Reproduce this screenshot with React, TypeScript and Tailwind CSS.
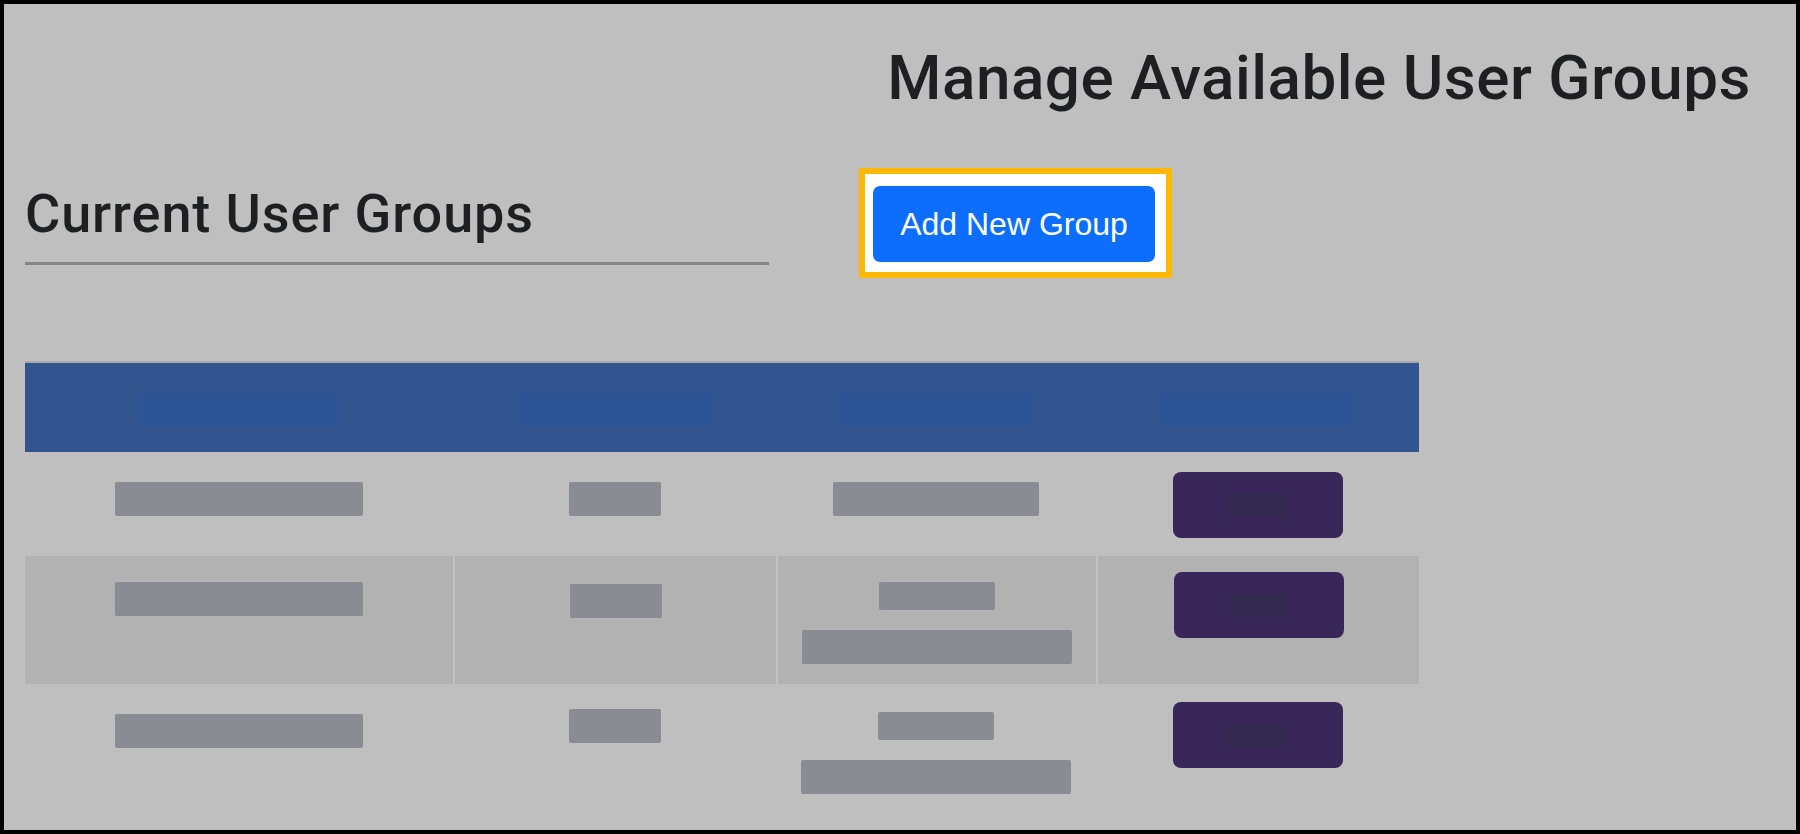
import React from 'react';

interface Cell { top: string; bars: { w: string; h: string; mt: string }[] }
interface Row { height: string; striped: boolean; name: Cell; count: Cell; members: Cell; action: string }

const rows: Row[] = [
  {
    height: 'h-[104px]', striped: false,
    name: { top: 'pt-[30px]', bars: [{ w: 'w-[248px]', h: 'h-[34px]', mt: 'mt-0' }] },
    count: { top: 'pt-[30px]', bars: [{ w: 'w-[92px]', h: 'h-[34px]', mt: 'mt-0' }] },
    members: { top: 'pt-[30px]', bars: [{ w: 'w-[206px]', h: 'h-[34px]', mt: 'mt-0' }] },
    action: 'pt-[20px]',
  },
  {
    height: 'h-[128px]', striped: true,
    name: { top: 'pt-[26px]', bars: [{ w: 'w-[248px]', h: 'h-[34px]', mt: 'mt-0' }] },
    count: { top: 'pt-[28px]', bars: [{ w: 'w-[92px]', h: 'h-[34px]', mt: 'mt-0' }] },
    members: { top: 'pt-[26px]', bars: [{ w: 'w-[116px]', h: 'h-[28px]', mt: 'mt-0' }, { w: 'w-[270px]', h: 'h-[34px]', mt: 'mt-[20px]' }] },
    action: 'pt-[16px]',
  },
  {
    height: 'h-[128px]', striped: false,
    name: { top: 'pt-[30px]', bars: [{ w: 'w-[248px]', h: 'h-[34px]', mt: 'mt-0' }] },
    count: { top: 'pt-[25px]', bars: [{ w: 'w-[92px]', h: 'h-[34px]', mt: 'mt-0' }] },
    members: { top: 'pt-[28px]', bars: [{ w: 'w-[116px]', h: 'h-[28px]', mt: 'mt-0' }, { w: 'w-[270px]', h: 'h-[34px]', mt: 'mt-[20px]' }] },
    action: 'pt-[18px]',
  },
];

const headers = ['w-[200px]', 'w-[196px]', 'w-[198px]', 'w-[196px]'];

function BarCell({ cell, divider }: { cell: Cell; divider: boolean }) {
  return (
    <div className={`flex flex-col items-center ${cell.top} ${divider ? 'border-l-2 border-[#c2c2c2]' : ''}`}>
      {cell.bars.map((b, i) => (
        <div key={i} className={`${b.w} ${b.h} ${b.mt} rounded-[2px] bg-[#8a8c94]`} />
      ))}
    </div>
  );
}

export default function App() {
  return (
    <div className="w-[1800px] h-[834px] border-4 border-black bg-[#bfbfbf] overflow-hidden font-['Liberation_Sans',Arial,sans-serif] text-[#1e1f22]">
      <div className="flex justify-end pt-[43px] pr-[45px]">
        <h1 className="font-['Roboto',sans-serif] font-medium text-[62px] leading-none tracking-[0.5px]">Manage Available User Groups</h1>
      </div>

      <div className="flex items-start mt-[59px] pl-[21px]">
        <div className="w-[744px] pt-[19px]">
          <h2 className="font-['Roboto',sans-serif] font-medium text-[54px] leading-none tracking-[0.9px]">Current User Groups</h2>
          <div className="mt-[21px] h-[3px] bg-[#858585]" />
        </div>
        <div className="ml-[90px] border-[6px] border-[#fcb900] bg-white pt-[12px] pb-[10px] pl-[8px] pr-[11px]">
          <button className="w-[282px] h-[76px] rounded-[7px] bg-[#0d6efd] text-white text-[32px] leading-none">Add New Group</button>
        </div>
      </div>

      <div className="mt-[83px] ml-[21px] w-[1394px]">
        <div className="grid grid-cols-[428px_323px_320px_323px] h-[91px] border-t-2 border-[#a8a8a8] bg-[#32558f]">
          {headers.map((w, i) => (
            <div key={i} className="flex justify-center pt-[30px]">
              <div className={`${w} h-[33px] bg-[#2d5596]`} />
            </div>
          ))}
        </div>
        {rows.map((r, i) => (
          <div key={i} className={`grid grid-cols-[428px_323px_320px_323px] ${r.height} ${r.striped ? 'bg-[#b2b2b2]' : ''}`}>
            <BarCell cell={r.name} divider={false} />
            <BarCell cell={r.count} divider={r.striped} />
            <BarCell cell={r.members} divider={r.striped} />
            <div className={`flex justify-center ${r.action} ${r.striped ? 'border-l-2 border-[#c2c2c2]' : ''}`}>
              <div className="w-[170px] h-[66px] rounded-[8px] bg-[#3a2759] flex items-center justify-center">
                <div className="w-[60px] h-[23px] bg-[#352a52]" />
              </div>
            </div>
          </div>
        ))}
      </div>
    </div>
  );
}
